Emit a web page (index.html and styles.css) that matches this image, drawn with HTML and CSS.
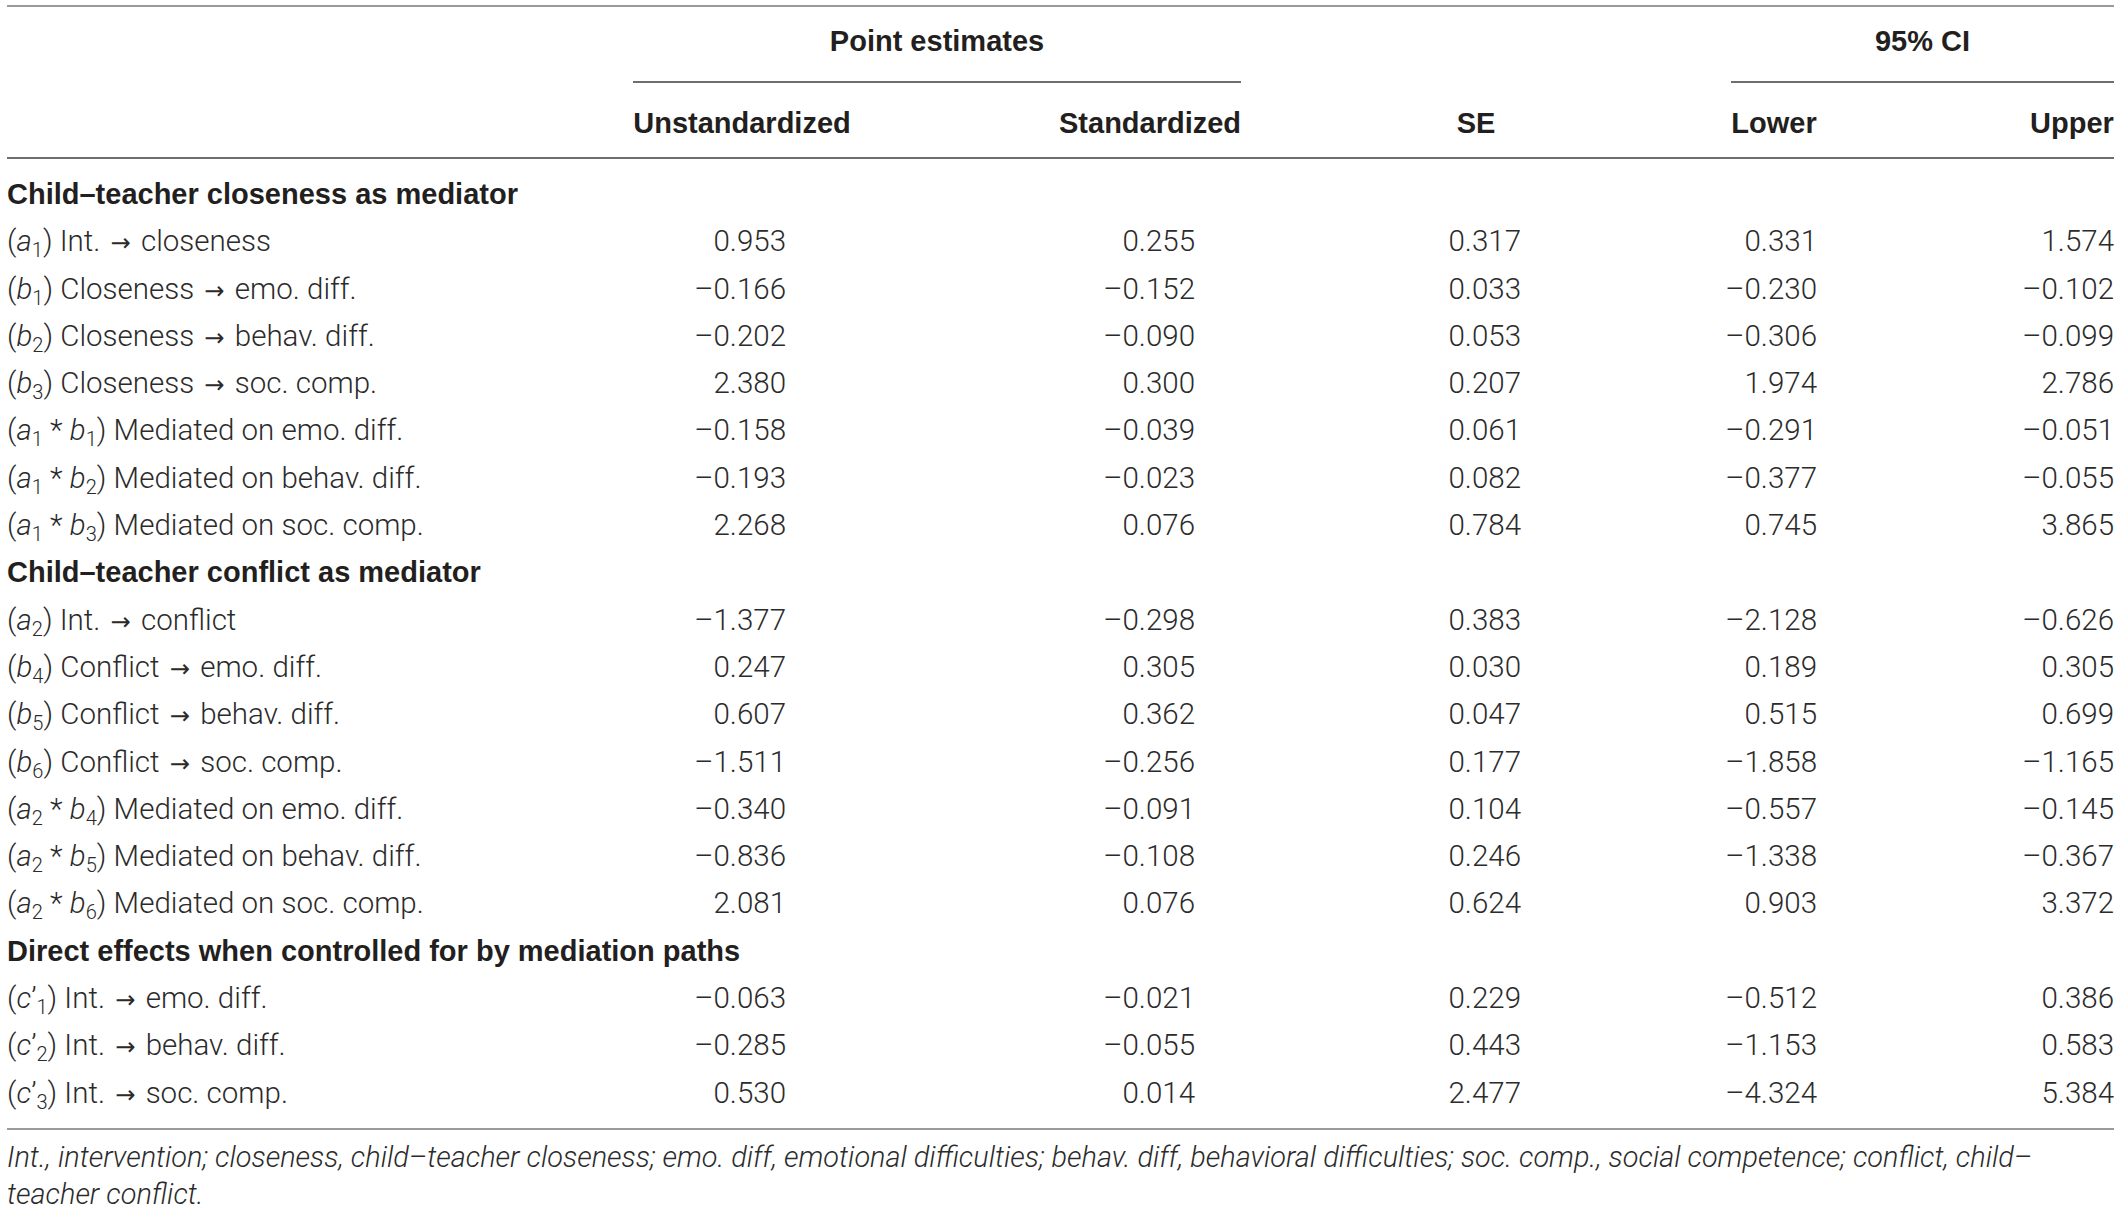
FILE: index.html
```html
<!DOCTYPE html>
<html lang="en">

<head>
    <meta charset="UTF-8">
    <meta name="viewport" content="width=device-width, initial-scale=1.0">
    <title>Mediation paths</title>
    <link rel="stylesheet" href="styles.css">
</head>

<body>
    <div class="wrap">
        <table class="results">
            <colgroup>
                <col class="c-label">
                <col class="c-unstd">
                <col class="c-std">
                <col class="c-se">
                <col class="c-lower">
                <col class="c-upper">
            </colgroup>
            <thead>
                <tr class="group-row">
                    <th></th>
                    <th colspan="2" class="group pe"><div class="group-title">Point estimates</div></th>
                    <th></th>
                    <th colspan="2" class="group ci"><div class="group-title">95% CI</div></th>
                </tr>
                <tr class="head-row">
                    <th></th>
                    <th>Unstandardized</th>
                    <th>Standardized</th>
                    <th>SE</th>
                    <th>Lower</th>
                    <th>Upper</th>
                </tr>
            </thead>
            <tbody>
                <tr class="section"><td colspan="6">Child–teacher closeness as mediator</td></tr>
                <tr><td>(<i>a</i><sub>1</sub>) Int. <span class="arr">→</span> closeness</td><td>0.953</td><td>0.255</td><td>0.317</td><td>0.331</td><td>1.574</td></tr>
                <tr><td>(<i>b</i><sub>1</sub>) Closeness <span class="arr">→</span> emo. diff.</td><td>–0.166</td><td>–0.152</td><td>0.033</td><td>–0.230</td><td>–0.102</td></tr>
                <tr><td>(<i>b</i><sub>2</sub>) Closeness <span class="arr">→</span> behav. diff.</td><td>–0.202</td><td>–0.090</td><td>0.053</td><td>–0.306</td><td>–0.099</td></tr>
                <tr><td>(<i>b</i><sub>3</sub>) Closeness <span class="arr">→</span> soc. comp.</td><td>2.380</td><td>0.300</td><td>0.207</td><td>1.974</td><td>2.786</td></tr>
                <tr><td>(<i>a</i><sub>1</sub> * <i>b</i><sub>1</sub>) Mediated on emo. diff.</td><td>–0.158</td><td>–0.039</td><td>0.061</td><td>–0.291</td><td>–0.051</td></tr>
                <tr><td>(<i>a</i><sub>1</sub> * <i>b</i><sub>2</sub>) Mediated on behav. diff.</td><td>–0.193</td><td>–0.023</td><td>0.082</td><td>–0.377</td><td>–0.055</td></tr>
                <tr><td>(<i>a</i><sub>1</sub> * <i>b</i><sub>3</sub>) Mediated on soc. comp.</td><td>2.268</td><td>0.076</td><td>0.784</td><td>0.745</td><td>3.865</td></tr>
                <tr class="section"><td colspan="6">Child–teacher conflict as mediator</td></tr>
                <tr><td>(<i>a</i><sub>2</sub>) Int. <span class="arr">→</span> conflict</td><td>–1.377</td><td>–0.298</td><td>0.383</td><td>–2.128</td><td>–0.626</td></tr>
                <tr><td>(<i>b</i><sub>4</sub>) Conflict <span class="arr">→</span> emo. diff.</td><td>0.247</td><td>0.305</td><td>0.030</td><td>0.189</td><td>0.305</td></tr>
                <tr><td>(<i>b</i><sub>5</sub>) Conflict <span class="arr">→</span> behav. diff.</td><td>0.607</td><td>0.362</td><td>0.047</td><td>0.515</td><td>0.699</td></tr>
                <tr><td>(<i>b</i><sub>6</sub>) Conflict <span class="arr">→</span> soc. comp.</td><td>–1.511</td><td>–0.256</td><td>0.177</td><td>–1.858</td><td>–1.165</td></tr>
                <tr><td>(<i>a</i><sub>2</sub> * <i>b</i><sub>4</sub>) Mediated on emo. diff.</td><td>–0.340</td><td>–0.091</td><td>0.104</td><td>–0.557</td><td>–0.145</td></tr>
                <tr><td>(<i>a</i><sub>2</sub> * <i>b</i><sub>5</sub>) Mediated on behav. diff.</td><td>–0.836</td><td>–0.108</td><td>0.246</td><td>–1.338</td><td>–0.367</td></tr>
                <tr><td>(<i>a</i><sub>2</sub> * <i>b</i><sub>6</sub>) Mediated on soc. comp.</td><td>2.081</td><td>0.076</td><td>0.624</td><td>0.903</td><td>3.372</td></tr>
                <tr class="section"><td colspan="6">Direct effects when controlled for by mediation paths</td></tr>
                <tr><td>(<i>c</i>’<sub>1</sub>) Int. <span class="arr">→</span> emo. diff.</td><td>–0.063</td><td>–0.021</td><td>0.229</td><td>–0.512</td><td>0.386</td></tr>
                <tr><td>(<i>c</i>’<sub>2</sub>) Int. <span class="arr">→</span> behav. diff.</td><td>–0.285</td><td>–0.055</td><td>0.443</td><td>–1.153</td><td>0.583</td></tr>
                <tr><td>(<i>c</i>’<sub>3</sub>) Int. <span class="arr">→</span> soc. comp.</td><td>0.530</td><td>0.014</td><td>2.477</td><td>–4.324</td><td>5.384</td></tr>
            </tbody>
        </table>
        <p class="note">Int., intervention; closeness, child–teacher closeness; emo. diff, emotional difficulties; behav. diff, behavioral difficulties; soc. comp., social competence; conflict, child–teacher conflict.</p>
    </div>
</body>
</html>
```

FILE: styles.css
```css
html,
body {
    margin: 0;
    padding: 0;
    background: #ffffff;
}

.wrap {
    padding: 5px 6px 0 7px;
    font-family: Roboto, "Liberation Sans", sans-serif;
    font-weight: 300;
    font-size: 29.5px;
    color: #2b2b2b;
}

.results {
    width: 2107px;
    table-layout: fixed;
    border-collapse: separate;
    border-spacing: 0;
    border-top: 2px solid #9a9a9a;
    border-bottom: 2px solid #9a9a9a;
}

.c-label { width: 421px; }
.c-unstd { width: 423px; }
.c-std { width: 390px; }
.c-se { width: 280px; }
.c-lower { width: 296px; }
.c-upper { width: 297px; }

.results th {
    font-family: "Liberation Sans", Arial, sans-serif;
    font-weight: bold;
    font-size: 29px;
    color: #231f20;
    padding: 0;
    text-align: center;
}

/* group headers over two columns */
.group-title {
    line-height: 68px;
    padding-bottom: 6px;
    border-bottom: 2px solid #6e6e6e;
}

.group-row .pe { padding-left: 205px; }
.group-row .ci { padding-left: 210px; }

.head-row th {
    padding-top: 6px;
    line-height: 68px;
    border-bottom: 2px solid #6e6e6e;
}

.head-row th:nth-child(2) { padding-left: 205px; }
.head-row th:nth-child(3) { padding-left: 208px; }
.head-row th:nth-child(4) { padding-left: 190px; }
.head-row th:nth-child(5) { padding-left: 210px; }
.head-row th:nth-child(6) { padding-left: 213px; }

.results td {
    padding: 0;
    height: 47.3px;
    line-height: 47.3px;
    text-align: right;
    white-space: nowrap;
}

.results tbody td:first-child {
    text-align: left;
}

.results tbody td:nth-child(2) { padding-right: 65px; }
.results tbody td:nth-child(3) { padding-right: 46px; }

.results tbody tr:first-child td { padding-top: 12px; }
.results tbody tr:last-child td { padding-bottom: 11px; }

.section td {
    font-family: "Liberation Sans", Arial, sans-serif;
    font-weight: bold;
    font-size: 29px;
    color: #231f20;
}

.results i {
    font-style: italic;
}

.results sub {
    font-size: 0.68em;
    vertical-align: -0.28em;
    line-height: 0;
}

/* Roboto's own arrow is too small */
.arr {
    font-family: "DejaVu Sans", sans-serif;
    font-weight: normal;
    font-size: 0.82em;
    line-height: 0;
    margin: 0 3px;
}

.note {
    margin: 9px 0 0 0;
    line-height: 37px;
    font-style: italic;
    font-size: 28.9px;
    color: #2b2b2b;
}
```
